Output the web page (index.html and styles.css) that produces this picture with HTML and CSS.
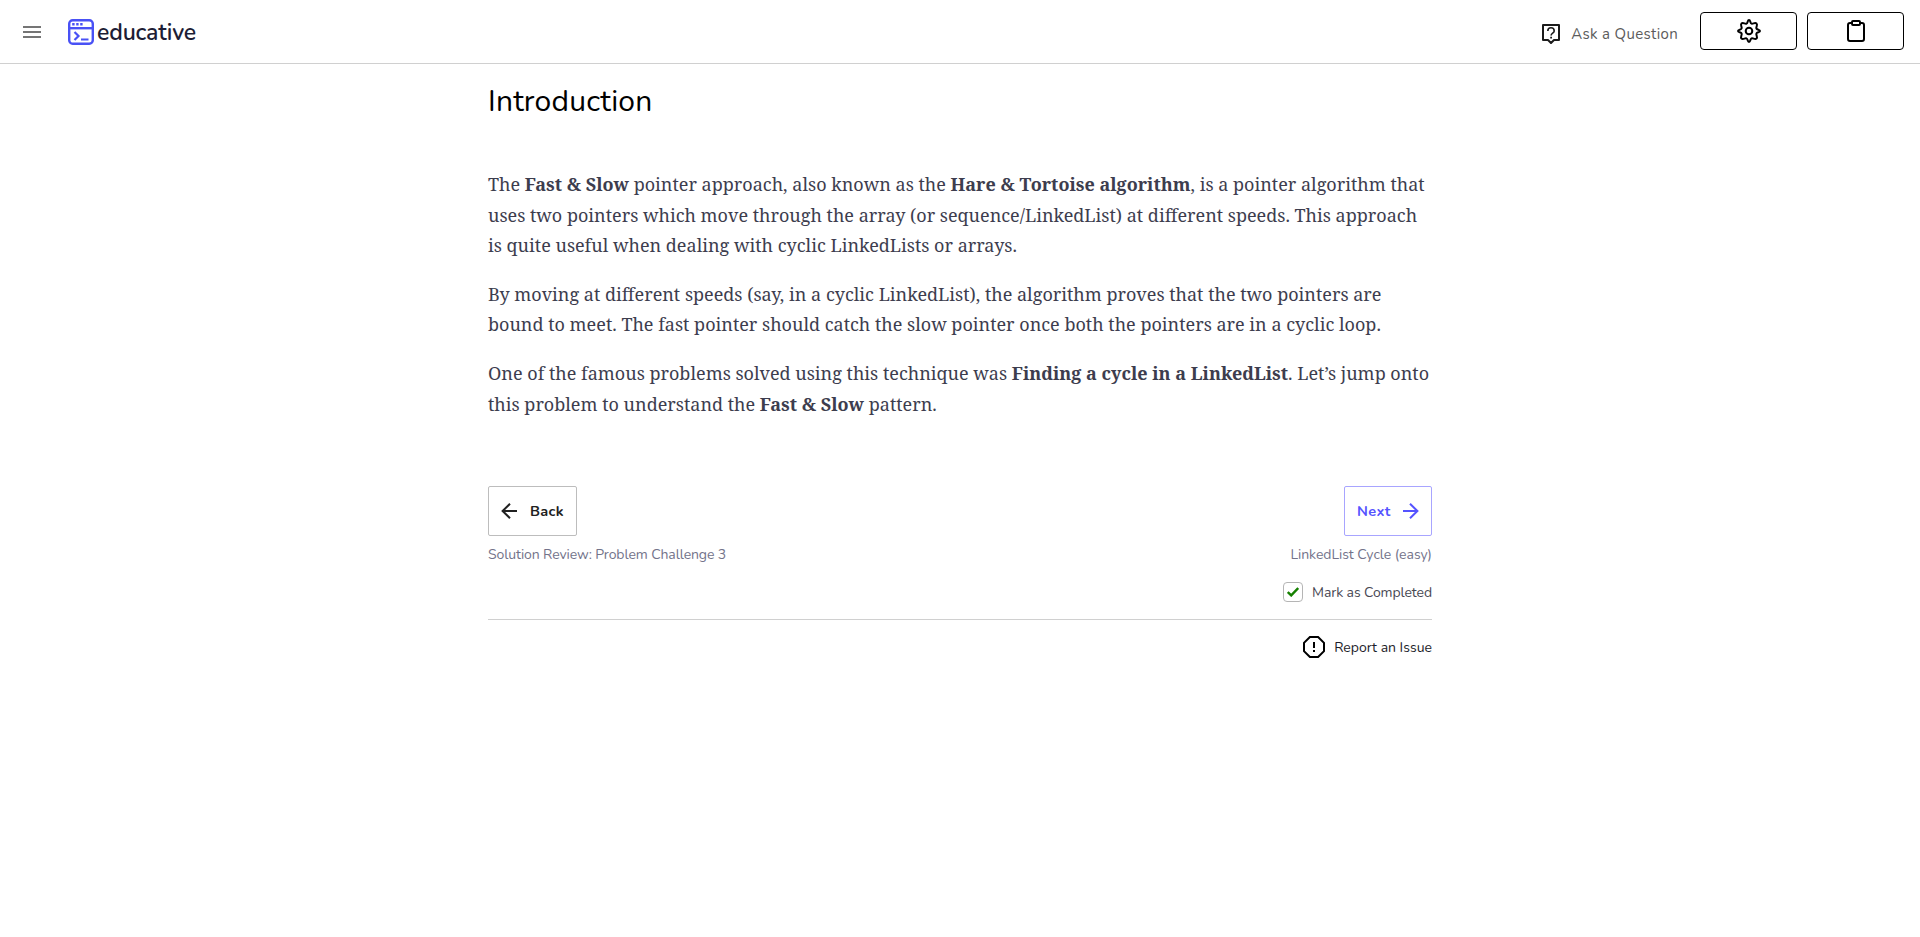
FILE: index.html
```html
<!DOCTYPE html>
<html lang="en">
<head>
<meta charset="utf-8">
<title>Introduction</title>
<link rel="stylesheet" href="styles.css">
</head>
<body>
<header class="topbar">
  <svg class="menu" viewBox="0 0 18 12"><path d="M0 1h18M0 6h18M0 11h18" stroke="#757575" stroke-width="1.8"/></svg>
  <div class="logo">
    <svg width="26" height="26" viewBox="0 0 26 26" fill="none" stroke="#4951f5" stroke-width="2.4"><rect x="1.200" y="1.200" width="23.600" height="23.600" rx="3.500"/><path d="M1 9.200h24"/><path d="M4.200 5.200h2.400M8.200 5.200h2.400M12.200 5.200h2.400"/><path d="M6.500 13l4 4-4 4M13 20.500h7.500" stroke-width="2.200"/></svg>
    <span class="brand">educative</span>
  </div>
  <div class="ask">
    <svg width="18" height="20" viewBox="0 0 18 20" fill="none" stroke="#1c1c1c" stroke-width="2"><path d="M1 1h16v15h-5l-3 3-3-3H1z" stroke-linejoin="round"/><path d="M5.800 7c0-4.300 6.400-4.300 6.400 0 0 2.100-3.100 2.200-3.100 4.400" stroke-width="1.600"/><path d="M9.100 12.700v1.700" stroke-width="1.800"/></svg>
    <span>Ask a Question</span>
  </div>
  <button class="tool"><svg width="24" height="24" viewBox="0 0 24 24" fill="none" stroke="#000" stroke-width="2" stroke-linejoin="round"><circle cx="12" cy="12" r="3.300"/><path d="M12 1C13.600 1 13 4 14.500 4.600S17.900 3 19.500 4.500 18.700 8 19.400 9.500 23 10.400 23 12s-3 1-3.600 2.500S21 18 19.500 19.500 16 18.700 14.500 19.400 13.600 23 12 23s-1-3-2.500-3.600S6 21 4.500 19.500 5.300 16 4.600 14.500 1 13.600 1 12s3-1 3.600-2.500S3 6 4.500 4.500 8 5.300 9.500 4.600 10.400 1 12 1z"/></svg></button>
  <button class="tool"><svg width="18" height="22" viewBox="0 0 18 22" fill="none" stroke="#000" stroke-width="2"><path d="M5 3H3a2 2 0 0 0-2 2v14a2 2 0 0 0 2 2h12a2 2 0 0 0 2-2V5a2 2 0 0 0-2-2h-2"/><rect x="5" y="1" width="8" height="4" rx="1"/></svg></button>
</header>
<main class="lesson">
  <h1>Introduction</h1>
  <div class="prose">
    <p>The <b>Fast &amp; Slow</b> pointer approach, also known as the <b>Hare &amp; Tortoise algorithm</b>, is a pointer algorithm that uses two pointers which move through the array (or sequence/LinkedList) at different speeds. This approach is quite useful when dealing with cyclic LinkedLists or arrays.</p>
    <p>By moving at different speeds (say, in a cyclic LinkedList), the algorithm proves that the two pointers are bound to meet. The fast pointer should catch the slow pointer once both the pointers are in a cyclic loop.</p>
    <p>One of the famous problems solved using this technique was <b>Finding a cycle in a LinkedList</b>. Let’s jump onto this problem to understand the <b>Fast &amp; Slow</b> pattern.</p>
  </div>
  <nav class="pager">
    <div class="side">
      <button class="step"><svg width="16" height="16" viewBox="0 0 16 16" fill="none" stroke="currentColor" stroke-width="2"><path d="M16 8H1.500M9 .8L1.600 8 9 15.200"/></svg><span>Back</span></button>
      <span class="caption prev">Solution Review: Problem Challenge 3</span>
    </div>
    <div class="side right">
      <button class="step next"><span>Next</span><svg width="16" height="16" viewBox="0 0 16 16" fill="none" stroke="currentColor" stroke-width="2"><path d="M0 8h14.500M7 .8L14.400 8 7 15.200"/></svg></button>
      <span class="caption">LinkedList Cycle (easy)</span>
    </div>
  </nav>
  <label class="done"><span class="box"><svg width="12" height="10" viewBox="0 0 12 10" fill="none" stroke="#158000" stroke-width="2.400"><path d="M.8 5l3.400 3.400L11.200 1"/></svg></span><span class="label">Mark as Completed</span></label>
  <div class="report"><svg width="22" height="22" viewBox="0 0 22 22" fill="none" stroke="#000" stroke-width="2"><path d="M6.900 1h8.200L21 6.900v8.200L15.100 21H6.900L1 15.100V6.900z"/><path d="M11 6v6M11 14v2"/></svg><span class="label">Report an Issue</span></div>
</main>
</body>
</html>
```
FILE: styles.css
```css
* { box-sizing: border-box; }
body { margin: 0; background: #fff; font-family: Nunito, Lato, sans-serif; }
svg { display: block; flex: none; }
button { background: #fff; font: inherit; padding: 0; }
.topbar { height: 64px; border-bottom: 1px solid #d0d0d0; display: flex; align-items: center; padding: 0 16px 0 23px; }
.menu { width: 18px; height: 12px; }
.logo { display: flex; align-items: center; gap: 3px; margin-left: 27px; padding-top: 1px; }
.brand { padding-top: 2px; font: 600 23px/24px Nunito, sans-serif; letter-spacing: -.15px; color: #1d1d35; }
.ask { display: flex; align-items: center; gap: 11px; margin-left: auto; margin-right: 22px; padding-top: 4px; font-size: 15px; letter-spacing: .34px; color: #5c5c5c; }
.tool { width: 97px; height: 38px; margin-bottom: 1px; border: 1px solid #000; border-radius: 4px; display: flex; align-items: center; justify-content: center; }
.tool + .tool { margin-left: 10px; }
.lesson { width: 944px; margin: 0 auto; }
h1 { margin: 18px 0 0; font-size: 30px; font-weight: 400; line-height: 40px; letter-spacing: .2px; color: #000; }
.prose { margin-top: 47px; font: 18px/30.6px "Noto Serif", "DejaVu Serif", serif; color: #3d3d4e; }
.prose p { margin: 0 0 18px; }
.pager { display: flex; justify-content: space-between; margin-top: 66.8px; }
.side { display: flex; flex-direction: column; align-items: flex-start; }
.right { align-items: flex-end; }
.step { width: 89px; height: 50px; border: 1px solid #bdbdbd; border-radius: 2px; display: flex; align-items: center; justify-content: space-between; padding: 0 12px; font-size: 14.5px; letter-spacing: .4px; font-weight: 700; color: #212121; }
.next { width: 88px; border-color: #a8a5ff; color: #5553ff; }
.caption { margin-top: 9px; font-size: 14px; line-height: 20px; letter-spacing: -.04px; color: #73738a; }
.prev { letter-spacing: -.1px; }
.done { display: flex; align-items: center; justify-content: flex-end; gap: 9px; margin-top: 17px; font-size: 14px; letter-spacing: -.1px; color: #484853; }
.label { padding-top: 1px; }
.box { width: 20px; height: 20px; border: 1px solid #b5b5b5; border-radius: 4px; display: flex; align-items: center; justify-content: center; }
.report { display: flex; align-items: center; justify-content: flex-end; gap: 9px; margin-top: 17px; padding-top: 16px; border-top: 1px solid #d0d0d0; font-size: 14px; color: #1d1d2a; }
```
